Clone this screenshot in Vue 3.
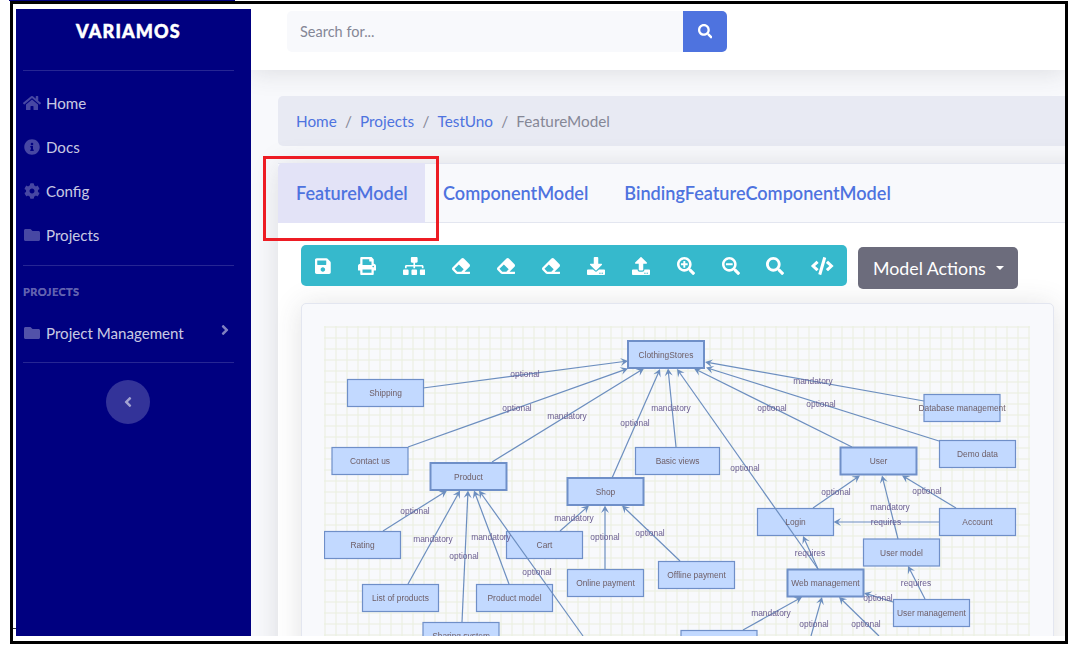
<script setup>
const I = {
  search: [512, 'M505 442.7L405.3 343c-4.5-4.5-10.6-7-17-7H372c27.6-35.3 44-79.7 44-128C416 93.1 322.9 0 208 0S0 93.1 0 208s93.1 208 208 208c48.3 0 92.7-16.4 128-44v16.3c0 6.4 2.5 12.5 7 17l99.7 99.7c9.4 9.4 24.6 9.4 33.9 0l28.3-28.3c9.4-9.4 9.4-24.6.1-34zM208 336c-70.7 0-128-57.2-128-128 0-70.7 57.2-128 128-128 70.7 0 128 57.2 128 128 0 70.7-57.2 128-128 128z'],
  home: [576, 'M280.37 148.26L96 300.11V464a16 16 0 0 0 16 16l112.06-.29a16 16 0 0 0 15.92-16V368a16 16 0 0 1 16-16h64a16 16 0 0 1 16 16v95.64a16 16 0 0 0 16 16.05L464 480a16 16 0 0 0 16-16V300L295.67 148.26a12.19 12.19 0 0 0-15.3 0zM571.6 251.47L488 182.56V44.05a12 12 0 0 0-12-12h-56a12 12 0 0 0-12 12v72.61L318.47 43a48 48 0 0 0-61 0L4.34 251.47a12 12 0 0 0-1.6 16.9l25.5 31A12 12 0 0 0 45.15 301l235.22-193.74a12.19 12.19 0 0 1 15.3 0L530.9 301a12 12 0 0 0 16.9-1.6l25.5-31a12 12 0 0 0-1.7-16.93z'],
  info: [512, 'M256 8C119.043 8 8 119.083 8 256c0 136.997 111.043 248 248 248s248-111.003 248-248C504 119.083 392.957 8 256 8zm0 110c23.196 0 42 18.804 42 42s-18.804 42-42 42-42-18.804-42-42 18.804-42 42-42zm56 254c0 6.627-5.373 12-12 12h-88c-6.627 0-12-5.373-12-12v-24c0-6.627 5.373-12 12-12h12v-64h-12c-6.627 0-12-5.373-12-12v-24c0-6.627 5.373-12 12-12h64c6.627 0 12 5.373 12 12v100h12c6.627 0 12 5.373 12 12v24z'],
  cog: [512, 'M487.4 315.7l-42.6-24.6c4.3-23.2 4.3-47 0-70.2l42.6-24.6c4.9-2.8 7.1-8.6 5.5-14-11.1-35.6-30-67.8-54.7-94.6-3.8-4.1-10-5.1-14.8-2.3L380.8 110c-17.9-15.4-38.5-27.3-60.8-35.1V25.8c0-5.6-3.9-10.5-9.4-11.7-36.7-8.2-74.3-7.8-109.2 0-5.5 1.2-9.4 6.1-9.4 11.7V75c-22.2 7.9-42.8 19.8-60.8 35.1L88.7 85.5c-4.9-2.8-11-1.9-14.8 2.3-24.7 26.7-43.6 58.9-54.7 94.6-1.7 5.4.6 11.2 5.5 14L67.3 221c-4.3 23.2-4.3 47 0 70.2l-42.6 24.6c-4.9 2.8-7.1 8.6-5.5 14 11.1 35.6 30 67.8 54.7 94.6 3.8 4.1 10 5.1 14.8 2.3l42.6-24.6c17.9 15.4 38.5 27.3 60.8 35.1v49.2c0 5.6 3.9 10.5 9.4 11.7 36.7 8.2 74.3 7.8 109.2 0 5.5-1.2 9.4-6.1 9.4-11.7v-49.2c22.2-7.9 42.8-19.8 60.8-35.1l42.6 24.6c4.9 2.8 11 1.9 14.8-2.3 24.7-26.7 43.6-58.9 54.7-94.6 1.5-5.5-.7-11.3-5.6-14.1zM256 336c-44.1 0-80-35.9-80-80s35.9-80 80-80 80 35.9 80 80-35.9 80-80 80z'],
  folder: [512, 'M464 128H272l-64-64H48C21.49 64 0 85.49 0 112v288c0 26.51 21.49 48 48 48h416c26.51 0 48-21.49 48-48V176c0-26.51-21.49-48-48-48z'],
  right: [256, 'M224.3 273l-136 136c-9.4 9.4-24.6 9.4-33.9 0l-22.6-22.6c-9.4-9.4-9.4-24.6 0-33.9l96.4-96.4-96.4-96.4c-9.4-9.4-9.4-24.6 0-33.9L54.3 103c9.4-9.4 24.6-9.4 33.9 0l136 136c9.5 9.4 9.5 24.6.1 34z'],
  left: [256, 'M31.7 239l136-136c9.4-9.4 24.6-9.4 33.9 0l22.6 22.6c9.4 9.4 9.4 24.6 0 33.9L127.9 256l96.4 96.4c9.4 9.4 9.4 24.6 0 33.9L201.7 409c-9.4 9.4-24.6 9.4-33.9 0l-136-136c-9.5-9.4-9.5-24.6-.1-34z'],
  save: [448, 'M433.941 129.941l-83.882-83.882A48 48 0 0 0 316.118 32H48C21.49 32 0 53.49 0 80v352c0 26.51 21.49 48 48 48h352c26.51 0 48-21.49 48-48V163.882a48 48 0 0 0-14.059-33.941zM224 416c-35.346 0-64-28.654-64-64 0-35.346 28.654-64 64-64s64 28.654 64 64c0 35.346-28.654 64-64 64zm96-304.52V212c0 6.627-5.373 12-12 12H76c-6.627 0-12-5.373-12-12V108c0-6.627 5.373-12 12-12h228.52c3.183 0 6.235 1.264 8.485 3.515l3.48 3.48A11.996 11.996 0 0 1 320 111.48z'],
  print: [512, 'M448 192V77.25c0-8.49-3.37-16.62-9.37-22.63L393.37 9.37c-6-6-14.14-9.37-22.63-9.37H96C78.33 0 64 14.33 64 32v160c-35.35 0-64 28.65-64 64v112c0 8.84 7.16 16 16 16h48v96c0 17.67 14.33 32 32 32h320c17.67 0 32-14.33 32-32v-96h48c8.84 0 16-7.16 16-16V256c0-35.35-28.65-64-64-64zm-64 256H128v-96h256v96zm0-224H128V64h192v48c0 8.84 7.16 16 16 16h48v96zm48 72c-13.25 0-24-10.75-24-24 0-13.26 10.75-24 24-24s24 10.74 24 24c0 13.25-10.75 24-24 24z'],
  sitemap: [640, 'M128 352H32c-17.67 0-32 14.33-32 32v96c0 17.67 14.33 32 32 32h96c17.67 0 32-14.33 32-32v-96c0-17.67-14.33-32-32-32zm-24-80h192v48h48v-48h192v48h48v-57.59c0-21.17-17.23-38.41-38.41-38.41H344v-64h40c17.67 0 32-14.33 32-32V32c0-17.67-14.33-32-32-32H256c-17.67 0-32 14.33-32 32v96c0 17.67 14.33 32 32 32h40v64H94.41C73.23 224 56 241.23 56 262.41V320h48v-48zm264 80h-96c-17.67 0-32 14.33-32 32v96c0 17.67 14.33 32 32 32h96c17.67 0 32-14.33 32-32v-96c0-17.67-14.33-32-32-32zm240 0h-96c-17.67 0-32 14.33-32 32v96c0 17.67 14.33 32 32 32h96c17.67 0 32-14.33 32-32v-96c0-17.67-14.33-32-32-32z'],
  eraser: [512, 'M497.941 273.941c18.745-18.745 18.745-49.137 0-67.882l-160-160c-18.745-18.745-49.136-18.746-67.883 0l-256 256c-18.745 18.745-18.745 49.137 0 67.882l96 96A48.004 48.004 0 0 0 144 480h356c6.627 0 12-5.373 12-12v-40c0-6.627-5.373-12-12-12H355.883l142.058-142.059zm-302.627-62.627l137.373 137.373L265.373 416H150.628l-80-80 124.686-124.686z'],
  download: [512, 'M216 0h80c13.3 0 24 10.7 24 24v168h87.7c17.8 0 26.7 21.5 14.1 34.1L269.7 378.3c-7.5 7.5-19.8 7.5-27.3 0L90.1 226.1c-12.6-12.6-3.7-34.1 14.1-34.1H192V24c0-13.3 10.7-24 24-24zm296 376v112c0 13.3-10.7 24-24 24H24c-13.3 0-24-10.7-24-24V376c0-13.3 10.7-24 24-24h146.7l49 49c20.1 20.1 52.5 20.1 72.6 0l49-49H488c13.3 0 24 10.7 24 24zm-124 88c0-11-9-20-20-20s-20 9-20 20 9 20 20 20 20-9 20-20zm64 0c0-11-9-20-20-20s-20 9-20 20 9 20 20 20 20-9 20-20z'],
  upload: [512, 'M296 384h-80c-13.3 0-24-10.7-24-24V192h-87.7c-17.8 0-26.7-21.5-14.1-34.1L242.3 5.7c7.5-7.5 19.8-7.5 27.3 0l152.2 152.2c12.6 12.6 3.7 34.1-14.1 34.1H320v168c0 13.3-10.7 24-24 24zm216-8v112c0 13.3-10.7 24-24 24H24c-13.3 0-24-10.7-24-24V376c0-13.3 10.7-24 24-24h136v8c0 30.9 25.1 56 56 56h80c30.9 0 56-25.1 56-56v-8h136c13.3 0 24 10.7 24 24zm-124 88c0-11-9-20-20-20s-20 9-20 20 9 20 20 20 20-9 20-20zm64 0c0-11-9-20-20-20s-20 9-20 20 9 20 20 20 20-9 20-20z'],
  plus: [512, 'M304 192v32c0 6.6-5.4 12-12 12h-56v56c0 6.6-5.4 12-12 12h-32c-6.6 0-12-5.4-12-12v-56h-56c-6.6 0-12-5.4-12-12v-32c0-6.6 5.4-12 12-12h56v-56c0-6.6 5.4-12 12-12h32c6.6 0 12 5.4 12 12v56h56c6.6 0 12 5.4 12 12zm201 284.7L476.7 505c-9.4 9.4-24.6 9.4-33.9 0L343 405.3c-4.5-4.5-7-10.6-7-17V372c-35.3 27.6-79.7 44-128 44C93.1 416 0 322.9 0 208S93.1 0 208 0s208 93.1 208 208c0 48.3-16.4 92.7-44 128h16.3c6.4 0 12.5 2.5 17 7l99.7 99.7c9.3 9.4 9.3 24.6 0 34zM344 208c0-75.2-60.8-136-136-136S72 132.8 72 208s60.8 136 136 136 136-60.8 136-136z'],
  minus: [512, 'M304 192v32c0 6.6-5.4 12-12 12H124c-6.6 0-12-5.4-12-12v-32c0-6.6 5.4-12 12-12h168c6.6 0 12 5.4 12 12zm201 284.7L476.7 505c-9.4 9.4-24.6 9.4-33.9 0L343 405.3c-4.5-4.5-7-10.6-7-17V372c-35.3 27.6-79.7 44-128 44C93.1 416 0 322.9 0 208S93.1 0 208 0s208 93.1 208 208c0 48.3-16.4 92.7-44 128h16.3c6.4 0 12.5 2.5 17 7l99.7 99.7c9.3 9.4 9.3 24.6 0 34zM344 208c0-75.2-60.8-136-136-136S72 132.8 72 208s60.8 136 136 136 136-60.8 136-136z'],
  code: [640, 'M278.9 511.5l-61-17.7c-6.4-1.8-10-8.5-8.2-14.9L346.2 8.7c1.8-6.4 8.5-10 14.9-8.2l61 17.7c6.4 1.8 10 8.5 8.2 14.9L293.8 503.3c-1.9 6.4-8.5 10.1-14.9 8.2zm-114-112.2l43.5-46.4c4.6-4.9 4.3-12.7-.8-17.2L117 256l90.6-79.7c5.1-4.5 5.5-12.3.8-17.2l-43.5-46.4c-4.5-4.8-12.1-5.1-17-.5L3.8 247.2c-5.1 4.7-5.1 12.8 0 17.5l144.1 135.1c4.9 4.6 12.5 4.4 17-.5zm327.2.6l144.1-135.1c5.1-4.7 5.1-12.8 0-17.5L492.1 112.1c-4.8-4.5-12.4-4.3-17 .5L431.6 159c-4.6 4.9-4.3 12.7.8 17.2L523 256l-90.6 79.7c-5.1 4.5-5.5 12.3-.8 17.2l43.5 46.4c4.5 4.9 12.1 5.1 17 .6z'],
}
const box = (k) => `0 0 ${I[k][0]} 512`

const navMain = [
  { label: 'Home', icon: 'home' },
  { label: 'Docs', icon: 'info' },
  { label: 'Config', icon: 'cog' },
  { label: 'Projects', icon: 'folder' },
]
const tools = ['save', 'print', 'sitemap', 'eraser', 'eraser', 'eraser', 'download', 'upload', 'plus', 'minus', 'search', 'code']

const nodes = [
  ['ClothingStores', 628, 341, 76, 27, 1],
  ['Shipping', 347.5, 379.5, 76, 27],
  ['Contact us', 332, 447.5, 76, 27],
  ['Product', 430.5, 463, 76, 27, 1],
  ['Basic views', 635.5, 447.5, 84, 27],
  ['Shop', 567.5, 478, 76, 27, 1],
  ['Database management', 924, 394.5, 76, 27],
  ['Demo data', 939.5, 440.5, 76, 27],
  ['User', 840.5, 447.5, 76, 27, 1],
  ['Rating', 324.5, 531.5, 76, 27],
  ['Cart', 506.5, 531.5, 76, 27],
  ['List of products', 362.5, 584.5, 76, 27],
  ['Product model', 476.5, 584.5, 76, 27],
  ['Online payment', 567.5, 569.5, 76, 27],
  ['Offline payment', 658.5, 561.5, 76, 27],
  ['Sharing system', 423, 622.5, 76, 27],
  ['Login', 757.5, 508.5, 76, 27],
  ['Account', 939.5, 508.5, 76, 27],
  ['User model', 863.5, 539, 76, 27],
  ['Web management', 787.5, 569.5, 76, 27, 1],
  ['User management', 893.5, 599.5, 76, 27],
  ['', 681, 630.5, 76, 27],
].map(([label, x, y, w, h, thick]) => ({ label, x, y, w, h, thick: !!thick }))

const edges = [
  [423, 388, 628, 361], [408, 447, 628, 368.5], [492, 462, 644, 368.5], [612, 478, 660, 369],
  [676, 447, 668, 368.5], [852, 447, 694, 368.5], [939, 441, 706, 367.5], [924, 401, 705, 362],
  [818, 569, 677, 369], [383, 531, 447, 490.5], [408, 584, 460, 490.5], [462, 622, 468, 490.5],
  [509, 584, 474, 490.5], [583, 636, 479, 490.5], [560, 531, 589, 505.5], [605, 569, 605, 505.5],
  [680, 561, 622, 505.5], [813, 508, 860, 475.5], [898, 539, 882, 475.5], [956, 508, 902, 475.5],
  [939, 522, 833.5, 522], [818, 569, 803, 536], [925, 599, 908, 566], [893, 602, 864, 593],
  [743, 630, 802, 597], [811, 636, 822, 597], [879, 636, 839, 597],
].map(([x1, y1, x2, y2]) => {
  const len = Math.hypot(x2 - x1, y2 - y1)
  const ux = (x2 - x1) / len
  const uy = (y2 - y1) / len
  const pt = (b, s) => `${x2 - ux * b - uy * s},${y2 - uy * b + ux * s}`
  return {
    x1, y1,
    x2: x2 - ux * 4,
    y2: y2 - uy * 4,
    head: [pt(0, 0), pt(7.5, 4), pt(4.5, 0), pt(7.5, -4)].join(' '),
  }
})

const labels = [
  ['optional', 525, 374], ['optional', 517, 408], ['mandatory', 567, 416], ['optional', 635, 423],
  ['mandatory', 671, 408], ['mandatory', 813, 381], ['optional', 821, 404], ['optional', 772, 408],
  ['optional', 745, 468], ['optional', 836, 492], ['optional', 927, 491], ['optional', 415, 511],
  ['mandatory', 433, 539], ['mandatory', 491, 537], ['optional', 464, 556], ['optional', 537, 572],
  ['mandatory', 574, 518], ['optional', 605, 537], ['optional', 650, 533], ['mandatory', 890, 507],
  ['requires', 886, 522], ['requires', 810, 553], ['requires', 916, 583], ['optional', 878, 598],
  ['mandatory', 771, 613], ['optional', 814, 624], ['optional', 866, 624],
]
</script>

<template>
  <div class="topline"></div>
  <div class="frame">
    <aside class="sidebar">
      <div class="brand">VARIAMOS</div>
      <hr class="rule" />
      <nav class="nav nav-main">
        <a v-for="n in navMain" :key="n.label" class="nav-item">
          <span class="nav-ico"><svg class="ico" :viewBox="box(n.icon)"><path :d="I[n.icon][1]" /></svg></span>
          <span>{{ n.label }}</span>
        </a>
      </nav>
      <hr class="rule rule-b" />
      <div class="heading">PROJECTS</div>
      <a class="nav-item nav-sub">
        <span class="nav-ico"><svg class="ico" :viewBox="box('folder')"><path :d="I.folder[1]" /></svg></span>
        <span>Project Management</span>
        <svg class="ico chev" :viewBox="box('right')"><path :d="I.right[1]" /></svg>
      </a>
      <hr class="rule rule-c" />
      <button class="toggle"><svg class="ico" :viewBox="box('left')"><path :d="I.left[1]" /></svg></button>
    </aside>

    <main class="main">
      <header class="topbar">
        <div class="searchbox">
          <div class="search-input">Search for...</div>
          <button class="search-btn"><svg class="ico" :viewBox="box('search')"><path :d="I.search[1]" /></svg></button>
        </div>
      </header>
      <section class="content">
        <ol class="crumbs">
          <li class="link">Home</li>
          <li class="sep">/</li>
          <li class="link">Projects</li>
          <li class="sep">/</li>
          <li class="link">TestUno</li>
          <li class="sep">/</li>
          <li>FeatureModel</li>
        </ol>
        <div class="card">
          <div class="tabs">
            <a class="tab active">FeatureModel</a>
            <a class="tab">ComponentModel</a>
            <a class="tab">BindingFeatureComponentModel</a>
          </div>
          <div class="card-body">
            <div class="actions">
              <div class="toolbar">
                <button v-for="(t, i) in tools" :key="i" class="tool">
                  <svg class="ico" :viewBox="box(t)"><path :d="I[t][1]" /></svg>
                </button>
              </div>
              <button class="model-btn">Model Actions<span class="caret"></span></button>
            </div>
            <div class="diagram">
              <svg class="graph" width="706" height="320" viewBox="324 326 706 320">
                <defs>
                  <pattern id="grid" x="324.5" y="326.5" width="11" height="11" patternUnits="userSpaceOnUse">
                    <path d="M0 .5H11M.5 0V11" fill="none" stroke="#e9eedd" stroke-width="1" />
                  </pattern>
                </defs>
                <rect x="324" y="326" width="706" height="320" fill="url(#grid)" />
                <rect v-for="n in nodes" :key="n.label + n.x" :x="n.x" :y="n.y" :width="n.w" :height="n.h" fill="#c2d9ff" stroke="#6f8fc8" :stroke-width="n.thick ? 2 : 1.2" />
                <g v-for="(e, i) in edges" :key="'e' + i">
                  <line :x1="e.x1" :y1="e.y1" :x2="e.x2" :y2="e.y2" stroke="#6c8ebf" stroke-width="1.2" />
                  <polygon :points="e.head" fill="#6c8ebf" />
                </g>
                <text v-for="n in nodes" :key="'t' + n.label + n.x" :x="n.x + n.w / 2" :y="n.y + n.h / 2 + 3" class="node-text">{{ n.label }}</text>
                <text v-for="(l, i) in labels" :key="'l' + i" :x="l[1]" :y="l[2] + 3" class="edge-text">{{ l[0] }}</text>
              </svg>
            </div>
          </div>
        </div>
      </section>
    </main>

    <div class="highlight"></div>
    <div class="tick"></div>
  </div>
</template>

<style>
html, body { margin: 0; background: #fff; overflow: hidden; }
</style>

<style scoped>
* { box-sizing: border-box; }
.topline { width: 226px; height: 1px; margin-left: 9px; background: #000080; }
.frame {
  position: relative;
  display: flex;
  width: 1058px;
  height: 643px;
  margin-left: 10px;
  padding: 5px 0 5px 3px;
  border: 3px solid #000;
  background: #fff;
  font-family: Lato, "Noto Sans", sans-serif;
  overflow: hidden;
}
.ico { display: block; height: 1em; fill: currentColor; }
.sidebar {
  display: flex;
  flex-direction: column;
  flex: 0 0 235px;
  padding: 0 17px 0 7px;
  background: #000080;
  color: rgba(255, 255, 255, 0.8);
}
.brand {
  height: 61px;
  padding-top: 13px;
  color: #fff;
  font-size: 18px;
  font-weight: 900;
  letter-spacing: 1.15px;
  line-height: 18px;
  text-align: center;
  -webkit-text-stroke: 0.5px #fff;
}
.rule { width: 211px; height: 1px; margin: 0; border: 0; background: rgba(255, 255, 255, 0.15); flex: none; }
.nav-main { margin-top: 10px; }
.nav-item { display: flex; align-items: center; height: 44px; font-size: 15.1px; }
.nav-ico { display: flex; justify-content: center; flex: 0 0 18px; margin-right: 5px; font-size: 16px; color: rgba(255, 255, 255, 0.28); }
.nav-sub .nav-ico { color: rgba(255, 255, 255, 0.32); }
.rule-b { margin-top: 8px; }
.heading { margin-top: 19px; height: 14px; font-size: 11px; font-weight: 900; line-height: 14px; color: rgba(255, 255, 255, 0.38); letter-spacing: 0.4px; -webkit-text-stroke: 0.2px rgba(255, 255, 255, 0.38); }
.nav-sub { margin-top: 12px; height: 44px; position: relative; }
.chev { position: absolute; right: 5px; top: 11px; font-size: 16px; color: rgba(255, 255, 255, 0.5); }
.rule-c { margin-top: 7px; }
.toggle {
  display: flex;
  align-items: center;
  justify-content: center;
  align-self: center;
  width: 44px;
  height: 44px;
  margin: 17px 1px 0 0;
  padding: 0;
  border: 0;
  border-radius: 50%;
  background: rgba(255, 255, 255, 0.2);
  color: rgba(255, 255, 255, 0.55);
  font-size: 16px;
}
.main { position: relative; flex: 1; min-width: 0; display: flex; flex-direction: column; background: #f8f9fc; overflow: hidden; }
.topbar {
  position: relative;
  z-index: 2;
  flex: 0 0 61px;
  padding: 2px 0 0 36px;
  background: #fff;
  box-shadow: 0 2px 26px rgba(58, 59, 69, 0.15);
}
.searchbox { display: flex; width: 440px; height: 41px; }
.search-input {
  flex: 1;
  padding-left: 13px;
  border-radius: 5px 0 0 5px;
  background: #f8f9fc;
  color: #858796;
  font-size: 14.5px;
  line-height: 41px;
}
.search-btn {
  display: flex;
  align-items: center;
  justify-content: center;
  width: 44px;
  padding: 0;
  border: 0;
  border-radius: 0 5px 5px 0;
  background: #4e73df;
  color: #fff;
  font-size: 14.5px;
}
.content { flex: 1; padding: 26px 0 0 27px; min-height: 0; }
.crumbs {
  display: flex;
  align-items: center;
  gap: 8.2px;
  width: 900px;
  height: 50px;
  margin: 0 0 17px;
  padding: 0 0 0 18px;
  list-style: none;
  border-radius: 5px;
  background: #e8eaf3;
  color: #858796;
  font-size: 15.3px;
}
.link { color: #4e73df; }
.card {
  width: 900px;
  height: 600px;
  border-radius: 5px 0 0 0;
  background: #fff;
  box-shadow: 0 2px 28px rgba(58, 59, 69, 0.15);
}
.tabs { display: flex; height: 60px; border-top: 1px solid #e3e6f0; border-bottom: 1px solid #e3e6f0; background: #f8f9fc; }
.tab {
  display: flex;
  align-items: center;
  padding: 0 18px;
  color: #4e73df;
  font-size: 18.1px;
  font-weight: 600;
}
.tab.active { width: 147px; margin-top: -1px; margin-bottom: -1px; border-radius: 5px 0 0 0; background: #e3e3f7; }
.card-body { padding: 22px 0 0 23px; }
.actions { display: flex; align-items: flex-start; gap: 11px; height: 58px; }
.toolbar { display: flex; align-items: center; width: 546px; height: 41px; padding: 0 1px; border-radius: 5px; background: #36b9cc; }
.tool { display: flex; padding: 0 13.44px; border: 0; background: none; color: #fff; font-size: 18px; }
.model-btn {
  display: flex;
  align-items: center;
  width: 160px;
  height: 42px;
  margin-top: 2px;
  padding: 0 0 0 15px;
  border: 0;
  border-radius: 5px;
  background: #6c6c7c;
  color: #fff;
  font-family: inherit;
  font-size: 17.8px;
}
.caret { width: 0; height: 0; margin-left: 10px; border-top: 4.8px solid #fff; border-left: 4.8px solid transparent; border-right: 4.8px solid transparent; }
.diagram {
  width: 753px;
  height: 400px;
  padding: 22px;
  border: 1px solid #e3e6f0;
  border-radius: 5px;
  background: #f8f9fc;
  box-shadow: 0 2px 28px rgba(58, 59, 69, 0.15);
}
.graph { display: block; filter: blur(0.25px); }
.node-text { font-family: "Liberation Sans", sans-serif; font-size: 8.4px; fill: #6e5e66; text-anchor: middle; }
.edge-text { font-family: "Liberation Sans", sans-serif; font-size: 8.4px; fill: #6a5d90; text-anchor: middle; }
.highlight { position: absolute; left: 250px; top: 152px; width: 176px; height: 85px; border: 3px solid #ed1c24; }
.tick { position: absolute; left: 0; top: 624px; width: 3px; height: 1px; background: #333; }
</style>
